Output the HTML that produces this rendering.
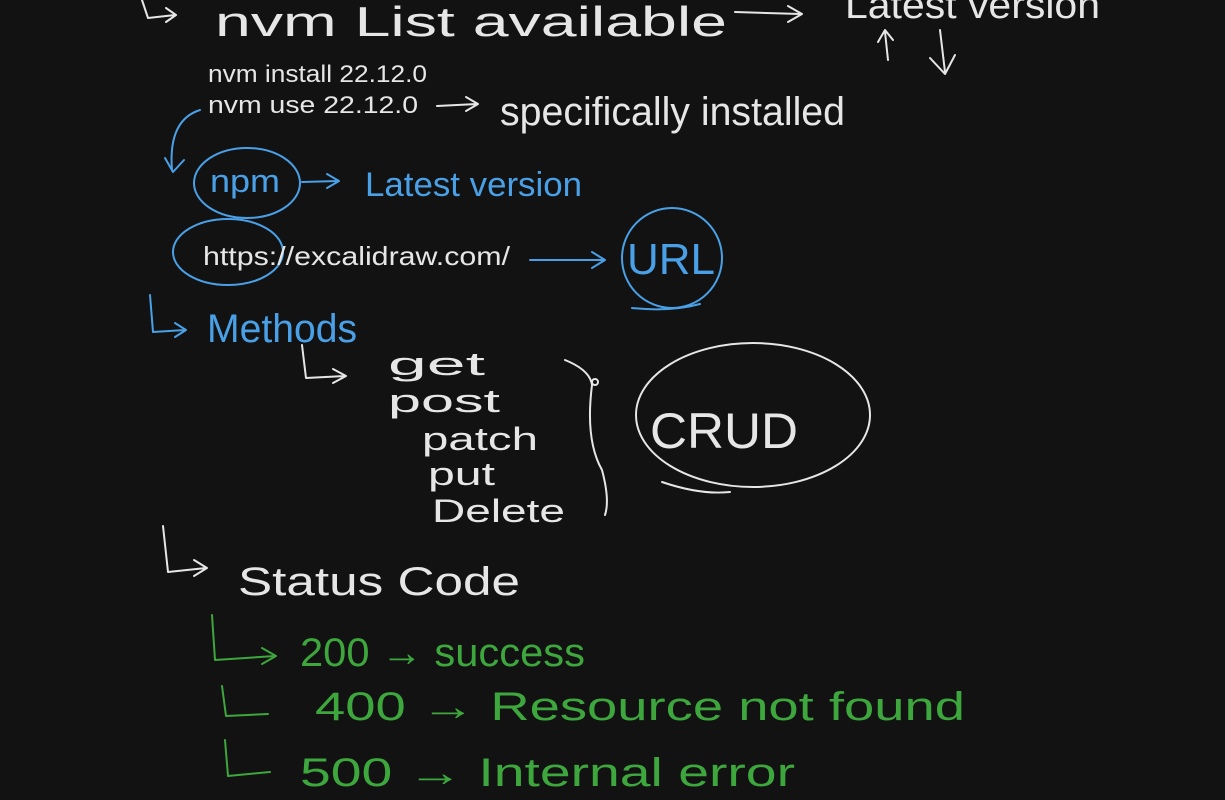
<!DOCTYPE html>
<html><head><meta charset="utf-8"><style>
html,body{margin:0;padding:0;background:#121212;width:1225px;height:800px;overflow:hidden}
svg{display:block}
text{font-family:"Liberation Sans",sans-serif}
</style></head><body>
<svg width="1225" height="800" viewBox="0 0 1225 800" xmlns="http://www.w3.org/2000/svg">
<g fill="none" stroke-linecap="round" stroke-linejoin="round" stroke-width="2">
 <g stroke="#e6e6e6">
  <path d="M142 0 L148 18 L175 15 M166 8 L176 15 L166 22"/>
  <path d="M735 12 L800 14 M788 6 L802 14 L788 22"/>
  <path d="M888 60 L885 32 M878 42 L885 30 L893 40"/>
  <path d="M940 30 L945 72 M930 58 L945 74 L955 55"/>
  <path d="M437 106 L477 104 M466 97 L478 104 L466 111"/>
  <path d="M302 345 L306 378 L345 376 M333 369 L346 376 L333 383"/>
  <path d="M565 360 Q590 370 592 385 Q585 440 602 470 Q610 500 605 515"/>
  <circle cx="595" cy="382" r="3"/>
  <ellipse cx="753" cy="415" rx="117" ry="72"/>
  <path d="M662 482 Q700 495 730 492"/>
  <path d="M163 526 L168 572 L206 568 M194 560 L207 568 L194 576"/>
 </g>
 <g stroke="#4aa0e6">
  <path d="M200 110 Q168 120 172 170 M165 158 L173 172 L184 160"/>
  <ellipse cx="247" cy="183" rx="53" ry="35"/>
  <path d="M302 182 L338 181 M327 174 L339 181 L327 188"/>
  <ellipse cx="228" cy="252" rx="55" ry="33"/>
  <path d="M530 260 L604 260 M592 252 L605 260 L592 268"/>
  <ellipse cx="672" cy="258" rx="50" ry="50"/>
  <path d="M632 308 Q670 312 700 304"/>
  <path d="M150 295 L153 332 L185 330 M175 323 L186 330 L175 337"/>
 </g>
 <g stroke="#3da63d">
  <path d="M212 615 L215 660 L275 656 M262 648 L276 656 L262 664"/>
  <path d="M222 686 L226 716 L268 714"/>
  <path d="M225 740 L228 776 L270 772"/>
 </g>
</g>
<g fill="#e6e6e6">
 <text x="215" y="36" font-size="42" textLength="512" lengthAdjust="spacingAndGlyphs">nvm  List  available</text>
 <text x="845" y="18" font-size="38" textLength="255" lengthAdjust="spacingAndGlyphs">Latest version</text>
 <text x="208" y="82" font-size="24" textLength="219" lengthAdjust="spacingAndGlyphs">nvm install 22.12.0</text>
 <text x="208" y="113" font-size="24" textLength="210" lengthAdjust="spacingAndGlyphs">nvm use 22.12.0</text>
 <text x="500" y="125" font-size="40" textLength="345" lengthAdjust="spacingAndGlyphs">specifically installed</text>
 <text x="203" y="265" font-size="26" textLength="307" lengthAdjust="spacingAndGlyphs">https://excalidraw.com/</text>
 <text x="388" y="375" font-size="32" textLength="97" lengthAdjust="spacingAndGlyphs">get</text>
 <text x="388" y="412" font-size="32" textLength="112" lengthAdjust="spacingAndGlyphs">post</text>
 <text x="422" y="450" font-size="32" textLength="116" lengthAdjust="spacingAndGlyphs">patch</text>
 <text x="428" y="485" font-size="32" textLength="67" lengthAdjust="spacingAndGlyphs">put</text>
 <text x="432" y="522" font-size="32" textLength="133" lengthAdjust="spacingAndGlyphs">Delete</text>
 <text x="650" y="448" font-size="50" textLength="148" lengthAdjust="spacingAndGlyphs">CRUD</text>
 <text x="238" y="595" font-size="40" textLength="282" lengthAdjust="spacingAndGlyphs">Status Code</text>
</g>
<g fill="#4aa0e6">
 <text x="210" y="192" font-size="32" textLength="70" lengthAdjust="spacingAndGlyphs">npm</text>
 <text x="365" y="196" font-size="34" textLength="217" lengthAdjust="spacingAndGlyphs">Latest version</text>
 <text x="627" y="274" font-size="44" textLength="88" lengthAdjust="spacingAndGlyphs">URL</text>
 <text x="207" y="342" font-size="40" textLength="150" lengthAdjust="spacingAndGlyphs">Methods</text>
</g>
<g fill="#3da63d">
 <text x="300" y="666" font-size="40" textLength="285" lengthAdjust="spacingAndGlyphs">200 → success</text>
 <text x="315" y="720" font-size="40" textLength="650" lengthAdjust="spacingAndGlyphs">400 → Resource not found</text>
 <text x="300" y="786" font-size="40" textLength="495" lengthAdjust="spacingAndGlyphs">500 → Internal error</text>
</g>
</svg>
</body></html>
